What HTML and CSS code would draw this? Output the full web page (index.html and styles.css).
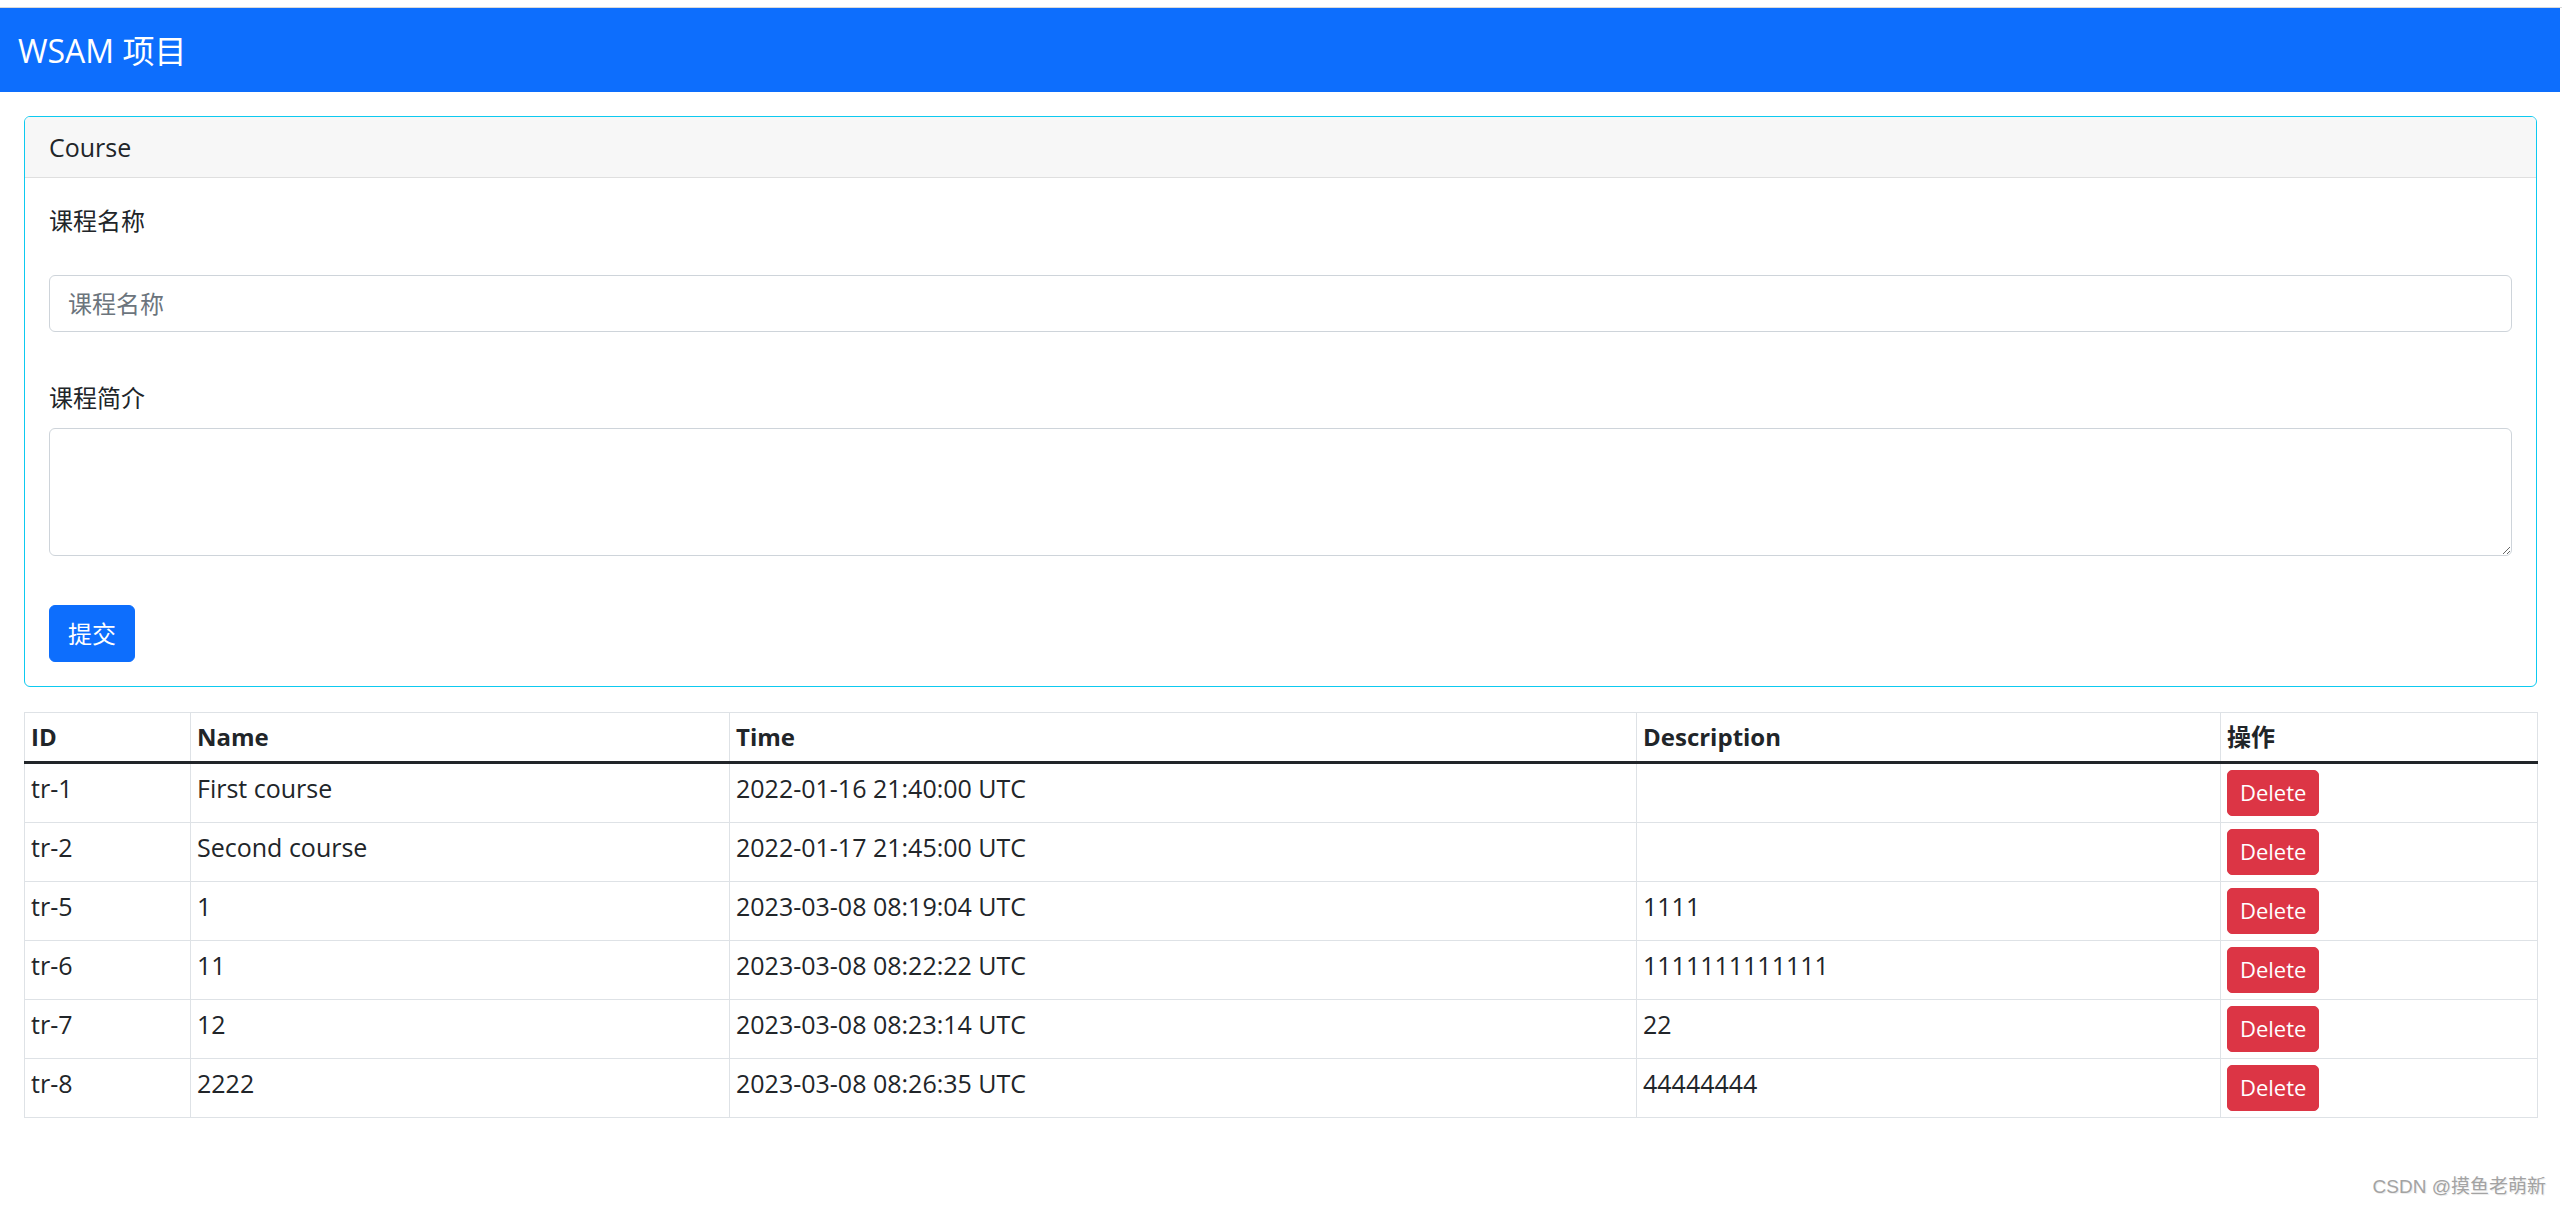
FILE: index.html
```html
<!DOCTYPE html>
<html lang="zh-CN">
<head>
<meta charset="utf-8">
<title>WSAM 项目</title>
<link rel="stylesheet" href="styles.css">
</head>
<body>
<div class="topline"></div>
<nav class="navbar"><span class="brand">WSAM 项目</span></nav>
<main class="container">
  <section class="card">
    <div class="card-header">Course</div>
    <form class="card-body">
      <label class="label label-name" for="name">课程名称</label>
      <input id="name" class="control" type="text" placeholder="课程名称">
      <label class="label label-desc" for="desc">课程简介</label>
      <textarea id="desc" class="control textarea" rows="3"></textarea>
      <button type="button" class="btn btn-primary">提交</button>
    </form>
  </section>
  <table class="table">
    <colgroup>
      <col class="c-id"><col class="c-name"><col class="c-time"><col class="c-desc"><col class="c-op">
    </colgroup>
    <thead>
      <tr><th>ID</th><th>Name</th><th>Time</th><th>Description</th><th>操作</th></tr>
    </thead>
    <tbody>
      <tr><td>tr-1</td><td>First course</td><td>2022-01-16 21:40:00 UTC</td><td></td><td><button type="button" class="btn btn-danger">Delete</button></td></tr>
      <tr><td>tr-2</td><td>Second course</td><td>2022-01-17 21:45:00 UTC</td><td></td><td><button type="button" class="btn btn-danger">Delete</button></td></tr>
      <tr><td>tr-5</td><td>1</td><td>2023-03-08 08:19:04 UTC</td><td>1111</td><td><button type="button" class="btn btn-danger">Delete</button></td></tr>
      <tr><td>tr-6</td><td>11</td><td>2023-03-08 08:22:22 UTC</td><td>1111111111111</td><td><button type="button" class="btn btn-danger">Delete</button></td></tr>
      <tr><td>tr-7</td><td>12</td><td>2023-03-08 08:23:14 UTC</td><td>22</td><td><button type="button" class="btn btn-danger">Delete</button></td></tr>
      <tr><td>tr-8</td><td>2222</td><td>2023-03-08 08:26:35 UTC</td><td>44444444</td><td><button type="button" class="btn btn-danger">Delete</button></td></tr>
    </tbody>
  </table>
</main>
<div class="watermark">CSDN @摸鱼老萌新</div>
</body>
</html>
```
FILE: styles.css
```css
* { box-sizing: border-box; }
html, body { margin: 0; padding: 0; }
body {
  font-family: "Open Sans", "Noto Sans CJK SC", sans-serif;
  font-size: 24px;
  line-height: 36px;
  color: #212529;
  background: #fff;
  width: 2562px;
  min-height: 1208px;
  position: relative;
}
.topline {
  height: 8px;
  border-bottom: 1px solid #d9d9d9;
}
.navbar {
  height: 84px;
  margin-right: 2px;
  background: #0d6efd;
  display: flex;
  align-items: center;
  padding-left: 18px;
}
.brand {
  color: #fff;
  font-size: 32px;
  line-height: 45px;
}
.container {
  padding: 24px 25px 0 24px;
}
.card {
  border: 1px solid #0dcaf0;
  border-radius: 6px;
  overflow: hidden;
  margin-bottom: 25px;
}
.card-header {
  background: #f7f7f7;
  border-bottom: 1px solid #dfdfdf;
  padding: 12px 24px;
  font-size: 25px;
  line-height: 36px;
}
.card-body {
  display: flex;
  flex-direction: column;
  align-items: flex-start;
  padding: 25px 24px 24px;
  margin: 0;
}
.label {
  display: block;
  line-height: 36px;
}
.label-name { margin-bottom: 36px; }
.label-desc { margin-top: 48px; margin-bottom: 12px; }
.control {
  display: block;
  width: 100%;
  font: inherit;
  color: #212529;
  background: #fff;
  border: 1px solid #ced4da;
  border-radius: 6px;
  padding: 9px 18px;
  line-height: 36px;
  height: 57px;
  outline: none;
}
.control::placeholder { color: #6c757d; }
.textarea {
  height: 128px;
  resize: vertical;
}
.btn {
  font: inherit;
  border: 1px solid transparent;
  cursor: pointer;
  vertical-align: top;
}
.btn-primary {
  margin-top: 49px;
  background: #0d6efd;
  border-color: #0d6efd;
  color: #fff;
  padding: 10px 18px 9px;
  line-height: 36px;
  height: 57px;
  border-radius: 6px;
}
.btn-danger {
  background: #dc3545;
  border-color: #dc3545;
  color: #fff;
  font-size: 22px;
  line-height: 32px;
  padding: 5px 12px 7px;
  height: 46px;
  width: 92px;
  border-radius: 5px;
}
.table {
  width: 100%;
  border-collapse: collapse;
  table-layout: fixed;
  border: 1px solid #dee2e6;
}
.c-id { width: 166px; }
.c-name { width: 539px; }
.c-time { width: 907px; }
.c-desc { width: 584px; }
.c-op { width: 317px; }
.table th, .table td {
  border: 1px solid #dee2e6;
  padding: 6px;
  text-align: left;
  vertical-align: top;
  line-height: 36px;
}
.table td { font-size: 25px; }
.table th { font-weight: 700; }
.table thead th { border-bottom: 3px solid #212529; }
.watermark {
  position: absolute;
  right: 16px;
  bottom: 9px;
  font-family: "Liberation Sans", "Noto Sans CJK SC", sans-serif;
  font-size: 19px;
  line-height: 24px;
  color: #a3a3a3;
  text-shadow: 1px 1px 0 #ededed;
}
```
